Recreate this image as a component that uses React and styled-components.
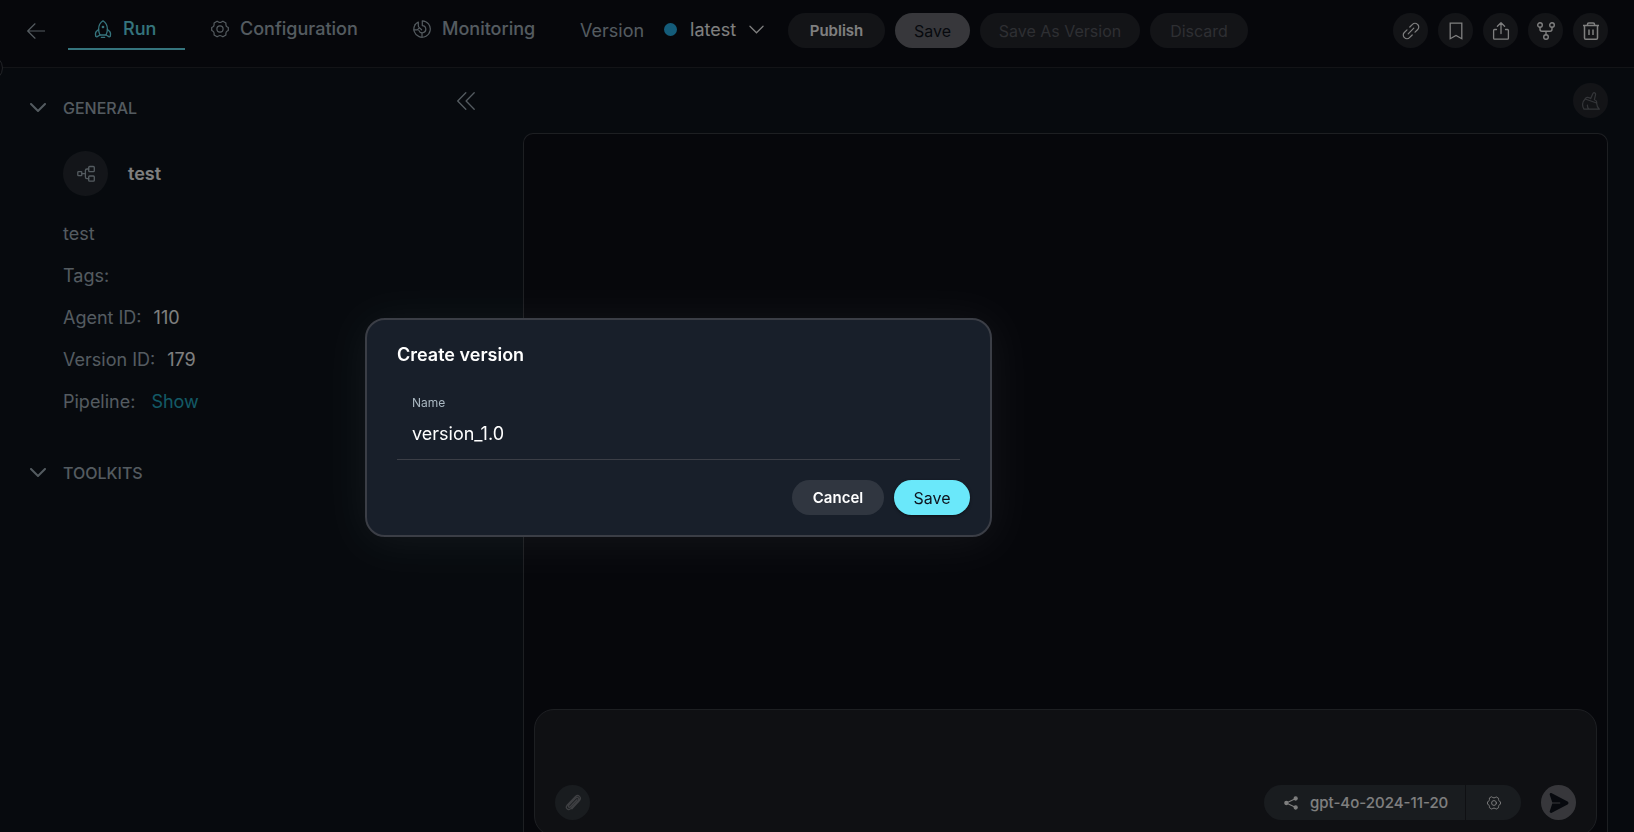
import { useState } from "react";
import styled, { createGlobalStyle } from "styled-components";

const GlobalStyle = createGlobalStyle`
    * {
        box-sizing: border-box;
    }

    body {
        margin: 0;
        height: 100vh;
        overflow: hidden;
        background-color: #0e151d;
        color: #a9b7c1;
        font-family: Inter, "Noto Sans", sans-serif;
        font-size: 18px;
    }

    button, input, textarea {
        font-family: inherit;
    }
`;

// ICONS
// eslint-disable-next-line react/prop-types
const Icon = ({ size = 18, children, width = 1.2 }) => (
    <svg width={size} height={size} viewBox="0 0 18 18" fill="none" stroke="currentColor" strokeWidth={width} strokeLinecap="round" strokeLinejoin="round" aria-hidden="true">
        {children}
    </svg>
);

const BackIcon = () => <Icon><path d="M17.5 9H.7M8 1.8.7 9 8 16.2" /></Icon>;

const RocketIcon = () => (
    <Icon width={1.3}>
        <path d="M9 .8C6 2.8 4.600 5.800 4.600 9.200c0 2 .5 3.900 1.400 5.800h6c.9-1.900 1.400-3.800 1.400-5.800C13.400 5.800 12 2.800 9 .8Z" />
        <path d="M4.600 9.400 2.300 11.500c-1 1-1.100 2.600-.5 5l1 .4L6 15M13.400 9.400l2.300 2.100c1 1 1.100 2.600.5 5l-1 .4L12 15M7.300 17.300h3.400" />
        <circle cx="9" cy="7" r=".7" fill="currentColor" />
    </Icon>
);

// eslint-disable-next-line react/prop-types
const GearIcon = ({ size }) => (
    <Icon size={size}>
        <path d="M6.1 1.2 7.5 2c.9.6 2.1.6 3 0l1.4-.8 3 1.8v1.7c0 1 .5 1.8 1.4 2.3l1 .5v3l-1 .5c-.9.5-1.4 1.3-1.4 2.3V15l-3 1.8-1.4-.8c-.9-.6-2.1-.6-3 0l-1.4.8-3-1.8v-1.7c0-1-.5-1.8-1.4-2.3l-1-.5v-3l1-.5c.9-.5 1.4-1.3 1.4-2.3V3Z" />
        <circle cx="9" cy="9" r="3.1" />
    </Icon>
);

const MonitoringIcon = () => (
    <Icon>
        <path d="M9.300.8a8.200 8.200 0 1 1-7.200 3.900M9.300.8v4.800a3.600 3.600 0 1 1-3.500 4.800" />
        <path d="M2.100 4.700C3 3.500 4 2.600 5.300 2v3.400c0 1 .2 1.500 1 2.200l2.300 2.200M1 9.800h3.300l1.500-1.500M9 12.800v4.300" />
    </Icon>
);

const LinkIcon = () => (
    <Icon>
        <path d="m6.2 11.8 5.6-5.6M7.8 5l2.7-2.7a3.5 3.5 0 0 1 5 0l.2.2a3.5 3.5 0 0 1 0 5L13 10.2M10.2 13l-2.7 2.7a3.5 3.5 0 0 1-5 0l-.2-.2a3.5 3.5 0 0 1 0-5L5 7.8" />
    </Icon>
);

const BookmarkIcon = () => <Icon width={1.3}><path d="M3.2 1.2h11.6v15.5L9 13.5l-5.8 3.2Z" strokeLinejoin="miter" /></Icon>;

const ShareIcon = () => <Icon width={1.3}><path d="M9 11.5V1M5.4 4.3 9 .8l3.6 3.5M4.5 7.5H2.6a1 1 0 0 0-1 1v7.7a1 1 0 0 0 1 1h12.8a1 1 0 0 0 1-1V8.5a1 1 0 0 0-1-1h-1.9" /></Icon>;

const ForkIcon = () => (
    <Icon width={1.4}>
        <circle cx="3" cy="3" r="2.3" />
        <circle cx="15" cy="3" r="2.3" />
        <circle cx="9" cy="15" r="2.3" />
        <path d="M3 5.3v1.9c0 1.3.8 2 2 2h8c1.2 0 2-.7 2-2V5.3M9 9.2v3.5" />
    </Icon>
);

const TrashIcon = () => <Icon width={1.5}><path d="M1 3.500h16M5.500 3.300V2.200c0-.8.5-1.300 1.300-1.300h4.400c.8 0 1.300.5 1.300 1.300v1.100M2.500 3.700v12.200c0 .8.5 1.300 1.300 1.300h10.400c.8 0 1.300-.5 1.300-1.300V3.700M7 7.500V13M11 7.500V13" strokeLinecap="butt" /></Icon>;

const BroomIcon = () => (
    <Icon width={1.2}>
        <path d="m8.700 6.600 2-4.700C11.600-.1 14 .7 13.500 2.800l-1.100 4.900c2 .6 2.600 1.800 2.200 3.300L3.200 7c.9-1.900 2.500-2.100 5.500-.4" />
        <path d="M3.200 7C.2 9.700-.2 14 2 17.200h15.300c-1.700-1.600-2.600-3.600-2.700-6.200M5.400 13.200c-.1 1.600.4 2.900 1.500 4" />
    </Icon>
);

const PipelineIcon = () => (
    <Icon width={1.3}>
        <rect x=".8" y="6.7" width="4" height="4" rx=".8" />
        <rect x="11.7" y="1.5" width="5.6" height="5.2" rx="1" />
        <rect x="11.7" y="11" width="5.6" height="5.2" rx="1" />
        <path d="M4.8 8.7h3.6M11.7 4H10c-1 0-1.6.6-1.6 1.6v6.500c0 1 .6 1.600 1.600 1.600h1.700" />
    </Icon>
);

const CollapseIcon = () => <Icon width={1.3}><path d="M8.8.7.7 9l8.1 8.300M17.200.7 9.100 9l8.100 8.300" /></Icon>;

const ClipIcon = () => <Icon width={1.3}><path d="m13 5.800-6.700 7c-1.100 1.100-2.600-.3-1.500-1.500l6.900-7.200c1.900-1.800 4.300.5 2.500 2.500l-7.600 8c-2.500 2.400-5.700-.7-3.500-3.300l8.200-8.600c3-2.900 6.700.7 4.200 3.900l-7.600 8.100" /></Icon>;

const NodesIcon = () => (
    <Icon size={14} width={1.5}>
        <path d="M15.2 3.2 3 9l12.2 5.8" />
        <circle cx="15" cy="3.2" r="2" fill="currentColor" />
        <circle cx="3" cy="9" r="2" fill="currentColor" />
        <circle cx="15" cy="14.8" r="2" fill="currentColor" />
    </Icon>
);

const SendIcon = () => (
    <svg width="20" height="20" viewBox="0 0 20 20" fill="currentColor" aria-hidden="true">
        <path d="M2.800.3 18.600 8.600c1.200.7 1.200 2.100 0 2.800L2.800 19.700c-1.300.6-2.500-.4-2-1.800L3.300 10.600h7.900V9.400H3.300L.8 2.100C.3.700 1.500-.3 2.800.3Z" />
    </svg>
);

// eslint-disable-next-line react/prop-types
const Chevron = ({ size = 16, width = 2 }) => (
    <svg width={size} height="9" viewBox="0 0 16 9" fill="none" stroke="currentColor" strokeWidth={width} strokeLinecap="round" aria-hidden="true">
        <path d="m1 1 7 7 7-7" />
    </svg>
);

const details = [
    { label: "Agent ID:", value: "110" },
    { label: "Version ID:", value: "179" },
];

export default function App() {
    const [showModal, setShowModal] = useState(true);
    const [name, setName] = useState("version_1.0");

    const handleClose = () => {
        setShowModal(false);
    };

    return (
        <>
            <GlobalStyle />
            <Page>
                <Header>
                    <BackButton aria-label="Back"><BackIcon /></BackButton>
                    <Tabs>
                        <Tab $active $width={117}><RocketIcon />Run</Tab>
                        <Tab $width={202}><GearIcon />Configuration</Tab>
                        <Tab $width={179}><MonitoringIcon />Monitoring</Tab>
                    </Tabs>
                    <Version>
                        <VersionLabel>Version</VersionLabel>
                        <VersionButton>
                            <Dot />
                            latest
                            <Chevron size={15} width={1.3} />
                        </VersionButton>
                    </Version>
                    <Actions>
                        <Pill $width={97} $strong>Publish</Pill>
                        <Pill $width={75} $variant="filled">Save</Pill>
                        <Pill $width={160} $variant="disabled" disabled>Save As Version</Pill>
                        <Pill $width={98} $variant="disabled" disabled>Discard</Pill>
                    </Actions>
                    <Tools>
                        <RoundButton aria-label="Copy link"><LinkIcon /></RoundButton>
                        <RoundButton aria-label="Bookmark"><BookmarkIcon /></RoundButton>
                        <RoundButton aria-label="Export"><ShareIcon /></RoundButton>
                        <RoundButton aria-label="Fork"><ForkIcon /></RoundButton>
                        <RoundButton aria-label="Delete"><TrashIcon /></RoundButton>
                    </Tools>
                    <DrawerHandle aria-label="Open menu" />
                </Header>

                <Content>
                    <Sidebar>
                        <SidebarTop>
                            <SectionButton><Chevron />GENERAL</SectionButton>
                            <CollapseButton aria-label="Collapse"><CollapseIcon /></CollapseButton>
                        </SidebarTop>
                        <General>
                            <Agent>
                                <Avatar><PipelineIcon /></Avatar>
                                <AgentName>test</AgentName>
                            </Agent>
                            <Line>test</Line>
                            <Line>Tags:</Line>
                            {details.map(({ label, value }) => (
                                <Line key={label}>{label}<Value>{value}</Value></Line>
                            ))}
                            <Line $gap={16}>Pipeline:<ShowLink href="#pipeline">Show</ShowLink></Line>
                        </General>
                        <SectionButton><Chevron />TOOLKITS</SectionButton>
                    </Sidebar>

                    <Chat>
                        <ChatTop>
                            <RoundButton $muted disabled aria-label="Clear chat"><BroomIcon /></RoundButton>
                        </ChatTop>
                        <ChatPanel>
                            <Composer>
                                <Message aria-label="Message" />
                                <ComposerBar>
                                    <AttachButton $muted disabled aria-label="Attach file"><ClipIcon /></AttachButton>
                                    <Model>
                                        <ModelButton><NodesIcon />gpt-4o-2024-11-20</ModelButton>
                                        <ModelSettings aria-label="Model settings"><GearIcon size={14} /></ModelSettings>
                                    </Model>
                                    <SendButton aria-label="Send"><SendIcon /></SendButton>
                                </ComposerBar>
                            </Composer>
                        </ChatPanel>
                    </Chat>
                </Content>
            </Page>

            {showModal && (
                <ModalWrapper>
                    <Modal role="dialog" aria-labelledby="modal-title">
                        <ModalTitle id="modal-title">Create version</ModalTitle>
                        <Field>
                            <FieldLabel htmlFor="version-name">Name</FieldLabel>
                            <FieldInput id="version-name" value={name} onChange={(event) => setName(event.target.value)} />
                        </Field>
                        <ModalActions>
                            <Pill $width={92} $variant="cancel" $strong onClick={handleClose}>Cancel</Pill>
                            <Pill $width={76} $variant="primary" onClick={handleClose}>Save</Pill>
                        </ModalActions>
                    </Modal>
                </ModalWrapper>
            )}
        </>
    );
}



// STYLING
const pillColors = {
    default: "background-color: #26282f; color: #fff;",
    filled: "background-color: #6e6f76; color: #0e131d;",
    disabled: "background-color: #26282f; color: #5c5e65;",
    cancel: "background-color: #303640; color: #fff;",
    primary: "background-color: #6ae8fa; color: #0e131d; box-shadow: 0 1px 3px rgba(0, 0, 0, .5);",
};

const PlainButton = styled.button`
    display: flex;
    align-items: center;
    padding: 0;
    border: none;
    background-color: transparent;
    color: #a9b7c1;
    font-size: 18px;
    cursor: pointer;
`;

// the last pixels of the page run below the fold
const Page = styled.div`
    display: flex;
    flex-direction: column;
    height: calc(100vh + 14px);
`;

const Header = styled.header`
    position: relative;
    display: flex;
    align-items: center;
    padding: 11px 26px 17px;
    border-bottom: 1px solid #26282f;
    background-color: #0d0f17;
`;

const DrawerHandle = styled.button`
    position: absolute;
    left: -23px;
    bottom: -14px;
    width: 26px;
    height: 26px;
    padding: 0;
    border: 1px solid #44474e;
    border-radius: 50%;
    background-color: #0d0f17;
`;

const BackButton = styled(PlainButton)`
    width: 42px;
    height: 35px;
    padding-left: 1px;
`;

const Tabs = styled.nav`
    display: flex;
`;

const Tab = styled(PlainButton)`
    gap: 11px;
    min-width: ${({ $width }) => $width}px;
    height: 39px;
    padding: 0 26px 2px;
    border-bottom: 2px solid ${({ $active }) => ($active ? "#6ae8fa" : "transparent")};
    color: ${({ $active }) => ($active ? "#6ae8fa" : "#a9b7c1")};
    font-weight: 500;
`;

const Version = styled.div`
    display: flex;
    align-items: center;
    gap: 20px;
    width: 222px;
    padding-left: 14px;
`;

const VersionLabel = styled.span`
    font-size: 18px;
`;

const VersionButton = styled(PlainButton)`
    gap: 13px;
    padding-bottom: 2px;
    color: #fff;
`;

const Dot = styled.span`
    width: 13px;
    height: 13px;
    border-radius: 50%;
    background-color: #29b8f5;
`;

const Actions = styled.div`
    display: flex;
    gap: 10px;
`;

const Pill = styled.button`
    min-width: ${({ $width }) => $width}px;
    height: 35px;
    padding: 0 16px;
    border: none;
    border-radius: 18px;
    ${({ $variant = "default" }) => pillColors[$variant]}
    font-size: ${({ $strong }) => ($strong ? 15 : 16)}px;
    font-weight: ${({ $strong }) => ($strong ? 600 : 400)};
    white-space: nowrap;
    cursor: pointer;
`;

const Tools = styled.div`
    display: flex;
    gap: 10px;
    margin-left: auto;
`;

const RoundButton = styled.button`
    display: flex;
    align-items: center;
    justify-content: center;
    width: 35px;
    height: 35px;
    padding: 0;
    border: none;
    border-radius: 50%;
    background-color: #26282f;
    color: ${({ $muted }) => ($muted ? "#686b71" : "#fff")};
    cursor: pointer;
`;

const Content = styled.main`
    display: grid;
    grid-template-columns: 523px 1fr;
    flex: 1;
`;

const Sidebar = styled.aside`
    padding: 24px 48px 0 30px;
`;

const SidebarTop = styled.div`
    display: flex;
    justify-content: space-between;
    align-items: flex-start;
`;

const SectionButton = styled(PlainButton)`
    gap: 17px;
    height: 31px;
    font-size: 16px;
    font-weight: 500;
`;

const CollapseButton = styled(PlainButton)`
    height: 18px;
`;

const General = styled.div`
    display: flex;
    flex-direction: column;
    gap: 18px;
    padding: 28px 0 43px 33px;
`;

const Agent = styled.div`
    display: flex;
    align-items: center;
    gap: 20px;
    margin-bottom: 8px;
`;

const Avatar = styled.span`
    display: flex;
    align-items: center;
    justify-content: center;
    width: 45px;
    height: 45px;
    border-radius: 50%;
    background-color: #262b32;
`;

const AgentName = styled.h1`
    margin: 0;
    color: #fff;
    font-size: 18px;
    font-weight: 600;
`;

const Line = styled.p`
    display: flex;
    gap: ${({ $gap = 12 }) => $gap}px;
    margin: 0;
    line-height: 24px;
`;

const Value = styled.span`
    color: #fff;
`;

const ShowLink = styled.a`
    color: #26b4cc;
    text-decoration: none;
`;

const Chat = styled.section`
    display: flex;
    flex-direction: column;
    padding-right: 26px;
`;

const ChatTop = styled.div`
    display: flex;
    justify-content: flex-end;
    padding: 15px 0;
`;

const ChatPanel = styled.div`
    display: flex;
    flex-direction: column;
    justify-content: flex-end;
    flex: 1;
    padding: 10px;
    border: 1px solid #3b3e45;
    border-bottom: none;
    border-radius: 10px 10px 0 0;
    background-color: #0d0f17;
`;

const Composer = styled.div`
    display: flex;
    flex-direction: column;
    padding: 15px 20px;
    border: 1px solid #3b3e45;
    border-radius: 20px;
    background-color: #1e2027;
`;

const Message = styled.textarea`
    height: 60px;
    padding: 0;
    border: none;
    outline: none;
    background-color: transparent;
    color: #fff;
    font-size: 15px;
    resize: none;
`;

const ComposerBar = styled.div`
    display: flex;
    align-items: center;
`;

const AttachButton = styled(RoundButton)`
    background-color: #32383e;
    color: #7c7f85;
`;

const Model = styled.div`
    display: flex;
    gap: 1px;
    margin: 0 20px 0 auto;
`;

const ModelButton = styled(PlainButton)`
    gap: 12px;
    min-width: 201px;
    height: 35px;
    padding: 0 16px 0 20px;
    border-radius: 18px 0 0 18px;
    background-color: #32383e;
    color: #fff;
    font-size: 15px;
    font-weight: 500;
`;

const ModelSettings = styled(PlainButton)`
    justify-content: center;
    width: 55px;
    border-radius: 0 18px 18px 0;
    background-color: #32383e;
    color: #fff;
`;

const SendButton = styled(RoundButton)`
    background-color: #6e6f76;
    color: #0e131d;
`;

const ModalWrapper = styled.div`
    display: flex;
    align-items: center;
    position: fixed;
    inset: 0;
    z-index: 1;
    padding: 23px 0 0 365px;
    background-color: rgba(0, 0, 0, .5);
`;

const Modal = styled.div`
    width: 627px;
    padding: 24px 20px 20px 30px;
    border: 2px solid #3b3e46;
    border-radius: 20px;
    background-color: #181f2a;
    box-shadow: 0 4px 44px rgba(255, 255, 255, .06);
`;

const ModalTitle = styled.h2`
    margin: 0;
    line-height: 22px;
    color: #fff;
    font-size: 18px;
    font-weight: 600;
`;

const Field = styled.div`
    display: flex;
    flex-direction: column;
    margin: 28px 10px 20px 0;
    padding: 0 15px 5px;
    border-bottom: 1px solid #3b3e46;
`;

const FieldLabel = styled.label`
    line-height: 18px;
    font-size: 12px;
`;

const FieldInput = styled.input`
    height: 42px;
    padding: 0;
    border: none;
    outline: none;
    background-color: transparent;
    color: #fff;
    font-size: 18px;
`;

const ModalActions = styled.div`
    display: flex;
    justify-content: flex-end;
    gap: 10px;
`;
